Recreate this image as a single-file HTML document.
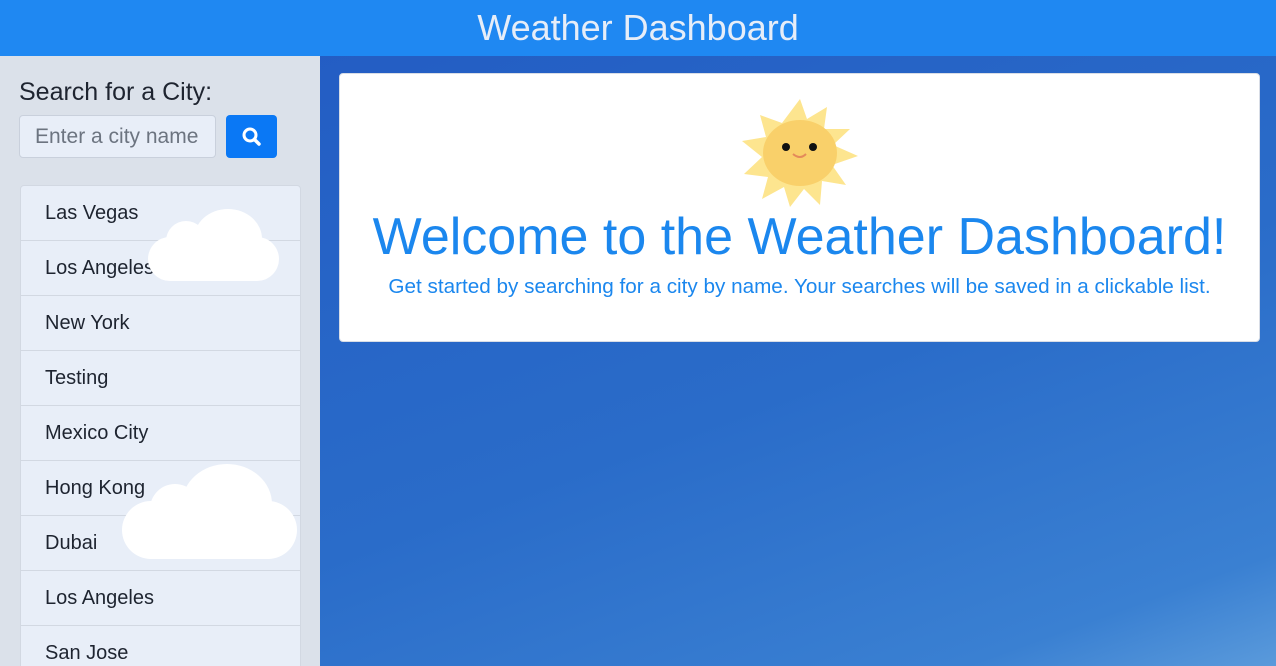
<!DOCTYPE html>
<html style="width:1276px;height:666px;overflow:hidden"><head><style>
*{margin:0;padding:0;box-sizing:border-box}
body{width:1276px;height:666px;overflow:hidden;font-family:"Liberation Sans",sans-serif;position:relative;background:linear-gradient(160deg,#2158c2 0%,#2a6cc9 60%,#3a80d2 90%,#5a9adb 100%)}
.hdr{position:absolute;left:0;top:0;width:1276px;height:56px;background:#1f88f2;color:#e6edf8;font-size:36px;text-align:center;line-height:56px}
.side{position:absolute;left:0;top:56px;width:320px;height:610px;background:#dbe1ea;overflow:hidden}
.side h2{position:absolute;left:19px;top:22px;font-size:25px;font-weight:normal;color:#1e2430}
.inp{position:absolute;left:19px;top:59px;width:197px;height:43px;border:1px solid #c9d0dc;border-radius:4px;background:#e8eef8;color:#6c7480;font-size:21px;line-height:41px;padding-left:15px}
.btn{position:absolute;left:226px;top:59px;width:51px;height:43px;background:#0a78f5;border-radius:4px}
.list{position:absolute;left:20px;top:129px;width:281px;border:1px solid #d2d8e2;border-radius:4px;background:#e8eef8}
.list div{height:55px;border-bottom:1px solid #d2d8e2;font-size:20px;color:#1e2430;line-height:54px;padding-left:24px}
.cloud{position:absolute;background:#fff;border-radius:30px}
.card{position:absolute;left:339px;top:73px;width:921px;height:269px;background:#fff;border-radius:4px;border:1px solid #d8dde6}
.card h1{position:absolute;left:0;width:100%;top:133px;text-align:center;font-size:52px;font-weight:normal;color:#1b87ee}
.card p{position:absolute;left:0;width:100%;top:201px;text-align:center;font-size:20.7px;color:#1b87ee}
</style></head><body>
<div class="hdr">Weather Dashboard</div>
<div class="side">
<h2>Search for a City:</h2>
<div class="inp">Enter a city name</div>
<div class="btn"><svg width="51" height="43"><circle cx="24" cy="20" r="6" fill="none" stroke="#fff" stroke-width="3"/><line x1="28.5" y1="24.5" x2="33" y2="29" stroke="#fff" stroke-width="3.5" stroke-linecap="round"/></svg></div>
<div class="list">
<div>Las Vegas</div><div>Los Angeles</div><div>New York</div><div>Testing</div><div>Mexico City</div><div>Hong Kong</div><div>Dubai</div><div>Los Angeles</div><div>San Jose</div>
</div>
<div class="cloud" style="left:148px;top:181px;width:131px;height:44px"></div>
<div class="cloud" style="left:166px;top:165px;width:40px;height:40px;border-radius:50%"></div>
<div class="cloud" style="left:194px;top:153px;width:68px;height:60px;border-radius:50%"></div>
<div class="cloud" style="left:122px;top:445px;width:175px;height:58px"></div>
<div class="cloud" style="left:150px;top:428px;width:50px;height:50px;border-radius:50%"></div>
<div class="cloud" style="left:182px;top:408px;width:90px;height:80px;border-radius:50%"></div>
</div>
<div class="card">
<svg style="position:absolute;left:400px;top:25px" width="120" height="110" viewBox="0 0 120 110">
<polygon fill="#fde58f" points="60,0 67,20 87,8 84,30 110,30 93,46 118,57 92,66 106,86 82,82 80,106 64,90 50,108 44,88 22,100 28,78 4,75 22,58 2,42 26,38 20,16 42,24"/>
<ellipse cx="60" cy="54" rx="37" ry="33" fill="#f9d06a"/>
<circle cx="46" cy="48" r="4" fill="#111"/><circle cx="73" cy="48" r="4" fill="#111"/>
<path d="M53 55 Q60 61 66 55" stroke="#e48a5a" stroke-width="2" fill="none"/>
</svg>
<h1>Welcome to the Weather Dashboard!</h1>
<p>Get started by searching for a city by name. Your searches will be saved in a clickable list.</p>
</div>
</body></html>
